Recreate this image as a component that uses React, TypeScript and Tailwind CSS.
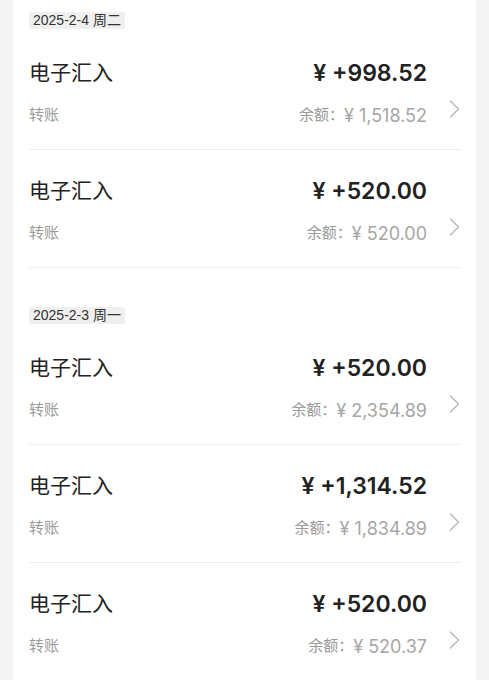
const font = { fontFamily: '"Liberation Sans", "Noto Sans CJK SC", sans-serif' };
const num = { fontFamily: 'Inter, "Liberation Sans", "Noto Sans CJK SC", sans-serif' };

interface Txn {
  amount: string;
  balance: string;
}

interface Section {
  date: string;
  items: Txn[];
}

const sections: Section[] = [
  {
    date: "2025-2-4 周二",
    items: [
      { amount: "+998.52", balance: "1,518.52" },
      { amount: "+520.00", balance: "520.00" },
    ],
  },
  {
    date: "2025-2-3 周一",
    items: [
      { amount: "+520.00", balance: "2,354.89" },
      { amount: "+1,314.52", balance: "1,834.89" },
      { amount: "+520.00", balance: "520.37" },
    ],
  },
];

const Chevron = () => (
  <svg width="11" height="18" viewBox="0 0 11 18" fill="none" className="mb-[12px]">
    <path d="M1.5 1 L9.5 9 L1.5 17" stroke="#b3b3b3" strokeWidth="1.2" strokeLinecap="round" strokeLinejoin="round" />
  </svg>
);

const Row = ({ item }: { item: Txn }) => (
  <div className="flex h-[118px] flex-col border-b border-[#ededed] pt-[28px]">
    <div className="flex h-[26px] items-center justify-between pr-[33px]">
      <span className="text-[21px] text-[#222]">电子汇入</span>
      <span className="text-[23px] font-semibold text-[#222]" style={num}>
        ¥ {item.amount}
      </span>
    </div>
    <div className="mt-[17px] flex h-[24px] items-center justify-between">
      <span className="text-[15px] text-[#9a9a9a]">转账</span>
      <div className="flex items-center gap-[22px]">
        <span className="flex items-center">
          <span className="text-[15px] text-[#9a9a9a]">余额：</span>
          <span className="text-[18px] text-[#a6a6a6]" style={num}>
            ¥ {item.balance}
          </span>
        </span>
        <Chevron />
      </div>
    </div>
  </div>
);

const App = () => {
  return (
    <div className="min-h-screen bg-[#f4f4f4] px-[13px]" style={font}>
      <div className="min-h-[680px] bg-white px-4">
        {sections.map((s, i) => (
          <div key={s.date} className={i === 0 ? "pt-3" : "pt-[39px]"}>
            <div className="flex h-[17px] w-fit items-center rounded-[2px] bg-[#efefef] px-[4px] text-[14px] text-[#333]">
              {s.date}
            </div>
            <div className="mt-[3px]">
              {s.items.map((item, j) => (
                <Row key={j} item={item} />
              ))}
            </div>
          </div>
        ))}
      </div>
    </div>
  );
};

export default App;
